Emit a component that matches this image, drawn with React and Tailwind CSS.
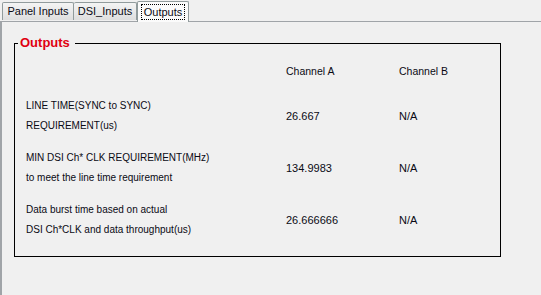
export default function App() {
  const rows = [
    { l1: "LINE TIME(SYNC to SYNC)", l2: "REQUIREMENT(us)", a: "26.667", b: "N/A" },
    { l1: "MIN DSI Ch* CLK REQUIREMENT(MHz)", l2: "to meet the line time requirement", a: "134.9983", b: "N/A" },
    { l1: "Data burst time based on actual", l2: "DSI Ch*CLK and data throughput(us)", a: "26.666666", b: "N/A" },
  ];
  return (
    <div
      className="w-[541px] h-[295px] bg-[#f0f0f0] text-[11px] text-[#0a0a14] overflow-hidden flex flex-col"
      style={{ fontFamily: '"Liberation Sans", Arial, sans-serif' }}
    >
      <div className="h-[21px] flex items-end pl-[2px] relative z-10">
        <div className="w-[72px] h-[18px] mb-[1px] border border-b-0 border-[#919b9c] rounded-t-[2px] bg-gradient-to-b from-[#f4f4f4] to-[#dedede] flex items-center justify-center">
          Panel Inputs
        </div>
        <div className="w-[63px] h-[18px] mb-[1px] border border-b-0 border-l-0 border-[#919b9c] rounded-t-[2px] bg-gradient-to-b from-[#f4f4f4] to-[#dedede] flex items-center justify-center">
          DSI_Inputs
        </div>
        <div className="w-[52px] h-[21px] -mb-[1px] border border-b-0 border-[#919b9c] rounded-t-[2px] bg-[#fbfbfb] flex items-center justify-center">
          <span className="border border-dotted border-black px-[2px] leading-[14px]">Outputs</span>
        </div>
      </div>
      <div className="flex-1 border-t border-l-2 border-[#a0a4a8] pl-[12px] pt-[21px]">
        <div className="relative w-[487px] border border-black pl-[11px] pt-[17px] pb-[16px]">
          <div className="absolute left-[3px] -top-[9px] pl-[2px] pr-[5px] bg-[#f0f0f0] text-[13px] font-bold text-[#e00010] leading-[16px]">
            Outputs
          </div>
          <div className="grid grid-cols-[260px_113px_1fr] leading-[20px] text-[10.5px]">
            <div></div>
            <div>Channel A</div>
            <div>Channel B</div>
          </div>
          <div className="flex flex-col gap-[12px] mt-[15px]">
            {rows.map((r, i) => (
              <div key={i} className="grid grid-cols-[260px_113px_1fr] items-center leading-[20px]">
                <div className="flex flex-col text-[10px]">
                  <span>{r.l1}</span>
                  <span>{r.l2}</span>
                </div>
                <div className="text-[11px]">{r.a}</div>
                <div className="text-[11px]">{r.b}</div>
              </div>
            ))}
          </div>
        </div>
      </div>
    </div>
  );
}
